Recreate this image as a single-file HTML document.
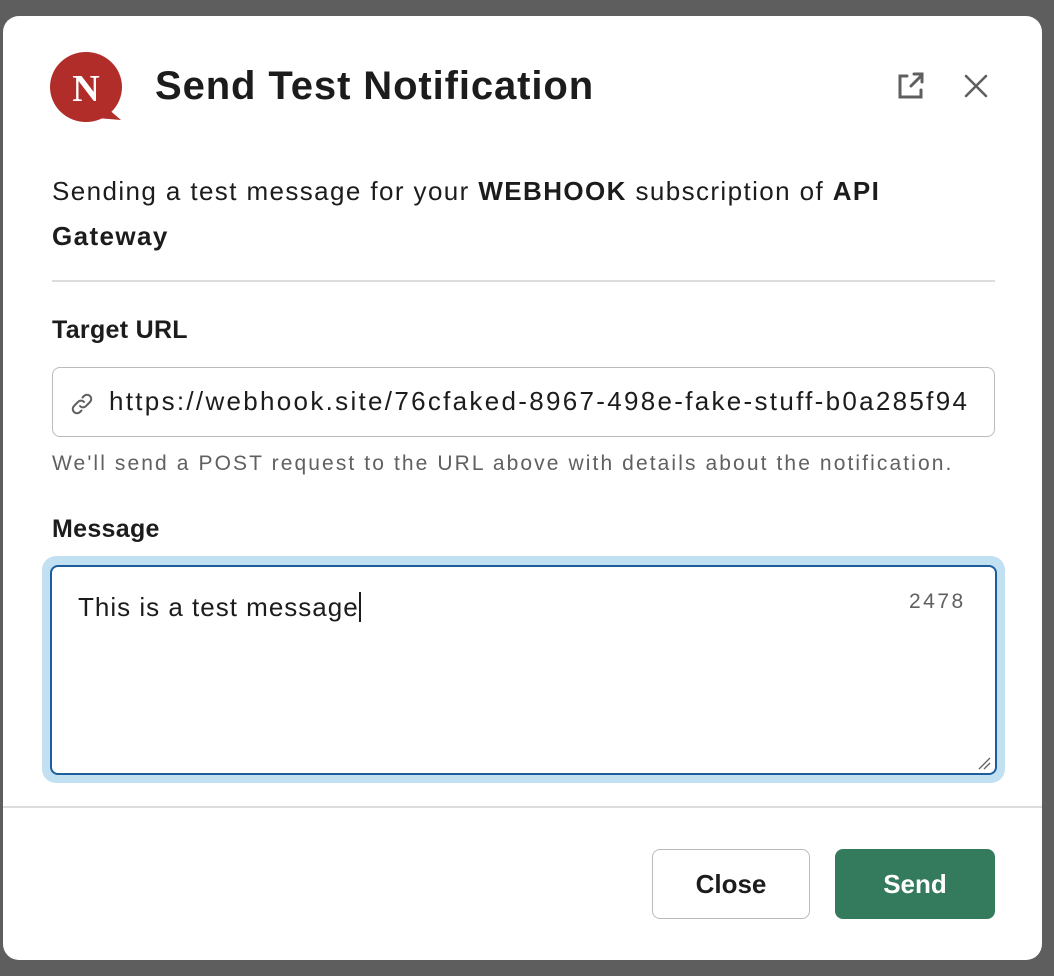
<!DOCTYPE html>
<html><head><meta charset="utf-8"><style>
*{box-sizing:border-box;margin:0;padding:0}
body{width:1054px;height:976px;background:#5e5e5e;font-family:"Liberation Sans",sans-serif;color:#1d1c1d;position:relative;overflow:hidden}
.modal{position:absolute;left:3px;top:16px;width:1039px;height:944px;background:#fff;border-radius:16px}
.abs{position:absolute;white-space:nowrap}
.title{left:152px;top:48px;font-size:40px;font-weight:bold;letter-spacing:0.9px}
.desc{left:49px;top:153px;font-size:26px;line-height:45px;width:905px;white-space:normal;letter-spacing:1.4px}
.hr{left:49px;width:943px;height:2px;background:#dddddd}
.lbl{font-size:25px;font-weight:bold;letter-spacing:0.3px}
.inp{left:49px;top:351px;width:943px;height:70px;border:1.5px solid #bbbbbb;border-radius:8px}
.url{left:106px;top:370px;font-size:26px;letter-spacing:2.3px}
.help{left:49px;top:436px;font-size:21px;color:#616061;letter-spacing:2.1px}
.glow{left:39px;top:540px;width:963px;height:227px;border-radius:14px;background:#c1e0f1}
.ta{left:47px;top:549px;width:947px;height:210px;border:2px solid #1d5d9c;border-radius:8px;background:#fff}
.btn{top:833px;height:70px;border-radius:8px;font-size:26px;font-weight:bold;display:flex;align-items:center;justify-content:center}
</style></head><body>
<div class="modal">
<svg class="abs" style="left:46px;top:36px" width="80" height="74" viewBox="0 0 80 74">
<ellipse cx="37" cy="35" rx="36" ry="35" fill="#b12d2a"/>
<path d="M58 56 L72 68 L48 66Z" fill="#b12d2a"/>
<text x="37" y="49" text-anchor="middle" font-family="Liberation Serif,serif" font-weight="bold" font-size="38" fill="#fff">N</text>
</svg>
<div class="abs title">Send Test Notification</div>
<svg class="abs" style="left:892px;top:55px" width="30" height="30" viewBox="0 0 30 30" fill="none" stroke="#5f5f5f" stroke-width="3" stroke-linecap="round">
<path d="M12 5H5v21h21v-7M16 15L27 4M19 3h8v8"/></svg>
<svg class="abs" style="left:960px;top:57px" width="26" height="26" viewBox="0 0 26 26" stroke="#5f5f5f" stroke-width="2.6" stroke-linecap="round"><path d="M3 3L23 23M23 3L3 23"/></svg>
<div class="abs desc">Sending a test message for your <b>WEBHOOK</b> subscription of <b>API Gateway</b></div>
<div class="abs hr" style="top:264px"></div>
<div class="abs lbl" style="left:49px;top:300px">Target URL</div>
<div class="abs inp"></div>
<svg class="abs" style="left:67px;top:376px" width="24" height="24" viewBox="0 0 24 24" fill="none" stroke="#616061" stroke-width="2" stroke-linecap="round"><path d="M10 14a4 4 0 0 0 6 0l4-4a4 4 0 0 0-6-6l-1.5 1.5M14 10a4 4 0 0 0-6 0l-4 4a4 4 0 0 0 6 6l1.5-1.5"/></svg>
<div class="abs url">https://webhook.site/76cfaked-8967-498e-fake-stuff-b0a285f94</div>
<div class="abs help">We'll send a POST request to the URL above with details about the notification.</div>
<div class="abs lbl" style="left:49px;top:499px">Message</div>
<div class="abs glow"></div>
<div class="abs ta"></div>
<div class="abs" style="left:75px;top:576px;font-size:26px;letter-spacing:1px">This is a test message<span style="display:inline-block;width:2px;height:30px;background:#1d1c1d;vertical-align:-6px"></span></div>
<div class="abs" style="left:906px;top:574px;font-size:21px;color:#616061;letter-spacing:2.5px">2478</div>
<svg class="abs" style="left:974px;top:740px" width="14" height="14" stroke="#616061" stroke-width="1.3"><path d="M2 13L13 2M7 13L13 7"/></svg>
<div class="abs hr" style="left:0;width:1039px;top:790px"></div>
<div class="abs btn" style="left:649px;width:158px;border:1.5px solid #bbbbbb;color:#1d1c1d">Close</div>
<div class="abs btn" style="left:832px;width:160px;background:#347a5c;color:#fff">Send</div>
</div>
</body></html>
